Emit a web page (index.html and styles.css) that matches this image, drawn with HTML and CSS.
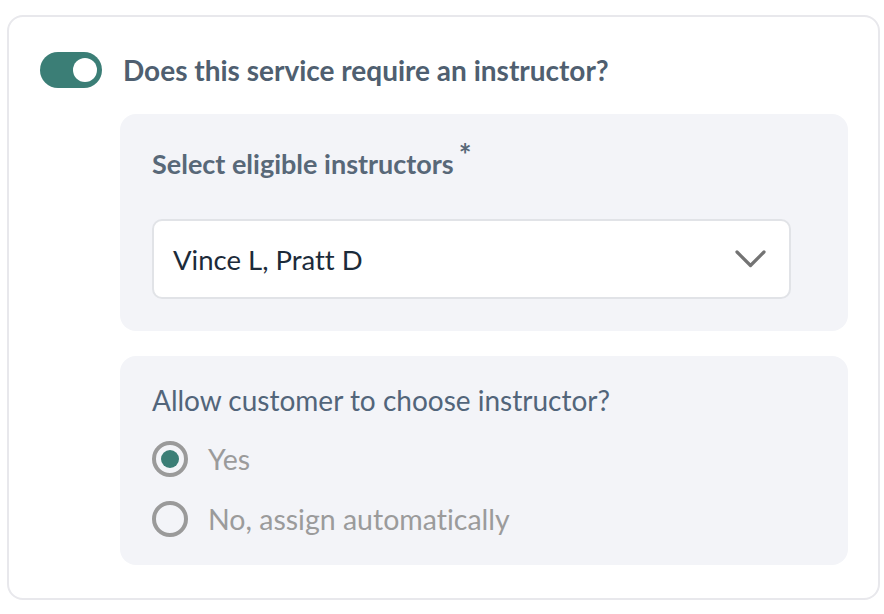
FILE: index.html
```html
<!DOCTYPE html>
<html>
<head>
<meta charset="utf-8">
<link rel="stylesheet" href="styles.css">
</head>
<body>
<div class="card">
  <div class="header">
    <span class="toggle"><span class="knob"></span></span>
    <span class="title">Does this service require an instructor?</span>
  </div>
  <div class="panels">
    <div class="panel panel-select">
      <div class="label">Select eligible instructors<span class="req">*</span></div>
      <div class="select">
        <span class="value">Vince L, Pratt D</span>
        <svg class="chev" width="31" height="18" viewBox="0 0 31 18"><path d="M2 2 L15.5 15.5 L29 2" fill="none" stroke="#737373" stroke-width="3.2" stroke-linecap="round" stroke-linejoin="round"/></svg>
      </div>
    </div>
    <div class="panel panel-radio">
      <div class="question">Allow customer to choose instructor?</div>
      <div class="option"><span class="radio checked"><span class="dot"></span></span><span class="opt-text">Yes</span></div>
      <div class="option"><span class="radio"></span><span class="opt-text">No, assign automatically</span></div>
    </div>
  </div>
</div>
</body>
</html>
```

FILE: styles.css
```css
* { box-sizing: border-box; }
body {
  margin: 0;
  background: #ffffff;
  font-family: "Lato", "Liberation Sans", sans-serif;
  font-variant-ligatures: none;
}
.card {
  margin: 15px 0 0 7px;
  width: 873px;
  height: 585px;
  border: 2px solid #e8e8ec;
  border-radius: 16px;
  padding: 35px 30px 0 31px;
}
.header {
  display: flex;
  align-items: center;
  gap: 21px;
  height: 36px;
}
.toggle {
  width: 62px;
  height: 36px;
  border-radius: 18px;
  background: #3b7e76;
  display: flex;
  align-items: center;
  justify-content: flex-end;
  padding-right: 5px;
}
.knob {
  width: 24px;
  height: 24px;
  border-radius: 50%;
  background: #ffffff;
}
.title {
  font-size: 28px;
  font-weight: 700;
  color: #4f5f70;
}
.panels {
  margin: 26px 0 0 80px;
  display: flex;
  flex-direction: column;
  gap: 25px;
}
.panel {
  width: 728px;
  background: #f3f4f8;
  border-radius: 16px;
  padding: 32px;
}
.label {
  font-size: 27px;
  font-weight: 700;
  color: #586878;
  line-height: 32px;
  height: 32px;
}
.req {
  font-size: 30px;
  position: relative;
  top: -8px;
  margin-left: 5px;
}
.select {
  margin-top: 41px;
  width: 639px;
  height: 80px;
  background: #ffffff;
  border: 2px solid #e1e3e7;
  border-radius: 10px;
  display: flex;
  align-items: center;
  justify-content: space-between;
  padding: 0 23px 0 19px;
}
.value {
  font-size: 27.5px;
  color: #1c2b3a;
}
.panel-radio {
  padding: 28px 32px 24px 32px;
  height: 209px;
}
.question {
  font-size: 28px;
  color: #52657a;
  line-height: 32px;
}
.option {
  display: flex;
  align-items: center;
  gap: 20px;
  height: 60px;
}
.panel-radio .question + .option { margin-top: 13px; }
.radio {
  width: 36px;
  height: 36px;
  border-radius: 50%;
  border: 4px solid #9a9a9a;
  display: flex;
  align-items: center;
  justify-content: center;
}
.dot {
  width: 18px;
  height: 18px;
  border-radius: 50%;
  background: #3b7e76;
}
.opt-text {
  font-size: 28.5px;
  color: #9b9b9b;
}
```
